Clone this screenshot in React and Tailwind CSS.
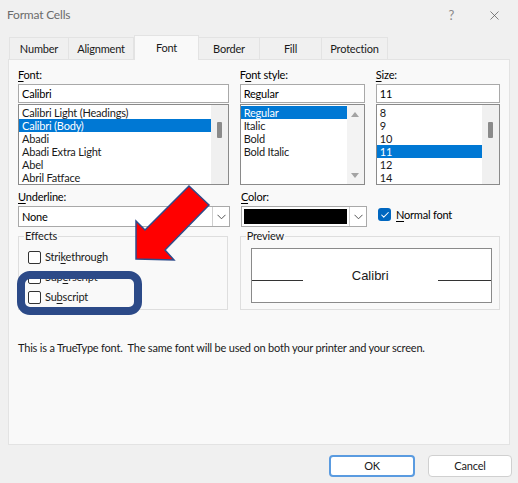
import { Check, X } from 'lucide-react';

const ui = { fontFamily: 'Lato, "Noto Sans", sans-serif' };

function Accel({ pre = '', u, post = '' }) {
  return (
    <span>
      {pre}
      <span className="underline underline-offset-2">{u}</span>
      {post}
    </span>
  );
}

function Chevron() {
  return (
    <svg width="9" height="6" viewBox="0 0 9 6" fill="none" stroke="#555" strokeWidth="1">
      <path d="M0.5 0.8 L4.5 4.8 L8.5 0.8" />
    </svg>
  );
}

function ListBox({ items, selected, scroll }) {
  return (
    <div className="flex h-[81px] border border-[#8a8a8a] bg-white mt-px">
      <div className="flex-1 pt-px">
        {items.map((item, i) => (
          <div
            key={item}
            className={`h-[13px] leading-[13px] pl-[3px] ${i === selected ? 'bg-[#0078d4] text-white' : 'text-[#1a1a1a]'}`}
          >
            {item}
          </div>
        ))}
      </div>
      {scroll === 'thumb' ? (
        <div className="w-[17px] bg-[#f0f0f0] flex justify-center pt-[17px]">
          <div className="w-[5px] h-[16px] bg-[#8a8a8a] rounded-[1px]" />
        </div>
      ) : (
        <div className="w-[17px] bg-[#f3f3f3] flex flex-col items-center justify-between pt-[7px] pb-[6px]">
          <div className="w-0 h-0 border-l-[4px] border-r-[4px] border-b-[5px] border-l-transparent border-r-transparent border-b-[#a3a3a3]" />
          <div className="w-0 h-0 border-l-[4px] border-r-[4px] border-t-[5px] border-l-transparent border-r-transparent border-t-[#a3a3a3]" />
        </div>
      )}
    </div>
  );
}

function Checkbox({ label }) {
  return (
    <div className="h-[20px] flex items-center">
      <div className="w-[13px] h-[13px] border border-[#333] rounded-[2px] bg-white" />
      <span className="ml-[4px] text-[#1a1a1a]">{label}</span>
    </div>
  );
}

export default function App() {
  const tabs = [
    { id: 'Number', w: 'w-[60px]' },
    { id: 'Alignment', w: 'w-[65px]' },
    { id: 'Font', w: 'w-[65px]' },
    { id: 'Border', w: 'w-[61px]' },
    { id: 'Fill', w: 'w-[62px]' },
    { id: 'Protection', w: 'w-[66px]' },
  ];

  return (
    <div className="relative w-[518px] h-[483px] bg-[#f0f0f0] overflow-hidden text-[11px] tracking-[-0.2px] leading-[14px]" style={ui}>
      {/* title bar */}
      <div className="h-[30px] flex items-center pl-[7px] pr-[16px]">
        <span className="text-[12px] text-[#6b6b6b]">Format Cells</span>
        <span className="ml-auto text-[13px] text-[#8a8a8a]">?</span>
        <X className="ml-[33px] w-[15px] h-[15px] text-[#5a5a5a]" strokeWidth={1.2} />
      </div>

      {/* tabs */}
      <div className="flex items-end pl-[9px] h-[29px]">
        {tabs.map((tab) =>
          tab.id === 'Font' ? (
            <div
              key={tab.id}
              className={`${tab.w} h-[25px] -mb-px relative z-10 bg-[#f9f9f9] border border-b-0 border-[#e3e3e3] flex items-center justify-center text-[#1a1a1a]`}
            >
              {tab.id}
            </div>
          ) : (
            <div
              key={tab.id}
              className={`${tab.w} h-[22px] border-t border-r border-[#e3e3e3] first:border-l flex items-center justify-center text-[#1a1a1a]`}
            >
              {tab.id}
            </div>
          )
        )}
      </div>

      {/* tab panel */}
      <div className="mx-[8px] h-[386px] bg-[#f9f9f9] border border-[#e3e3e3] px-[9px] pt-[8px]">
        <div className="flex">
          <div className="w-[212px]">
            <div className="h-[14px]"><Accel u="F" post="ont:" /></div>
            <div className="mt-[2px] h-[19px] border border-[#a9a9a9] bg-white pl-[3px] leading-[17px]">Calibri</div>
            <ListBox
              items={['Calibri Light (Headings)', 'Calibri (Body)', 'Abadi', 'Abadi Extra Light', 'Abel', 'Abril Fatface']}
              selected={1}
              scroll="thumb"
            />
          </div>
          <div className="w-[126px] ml-[11px]">
            <div className="h-[14px]"><Accel pre="F" u="o" post="nt style:" /></div>
            <div className="mt-[2px] h-[19px] border border-[#a9a9a9] bg-white pl-[3px] leading-[17px]">Regular</div>
            <ListBox items={['Regular', 'Italic', 'Bold', 'Bold Italic']} selected={0} scroll="arrows" />
          </div>
          <div className="w-[125px] ml-[11px]">
            <div className="h-[14px]"><Accel u="S" post="ize:" /></div>
            <div className="mt-[2px] h-[19px] border border-[#a9a9a9] bg-white pl-[3px] leading-[17px]">11</div>
            <ListBox items={['8', '9', '10', '11', '12', '14']} selected={3} scroll="thumb" />
          </div>
        </div>

        <div className="flex mt-[5px]">
          <div className="w-[212px]">
            <div className="h-[14px]"><Accel u="U" post="nderline:" /></div>
            <div className="mt-[2px] h-[21px] flex border border-[#a9a9a9] bg-white">
              <div className="flex-1 pl-[3px] leading-[19px]">None</div>
              <div className="w-[17px] border-l border-[#cfcfcf] flex items-center justify-center"><Chevron /></div>
            </div>
          </div>
          <div className="w-[126px] ml-[11px]">
            <div className="h-[14px]"><Accel u="C" post="olor:" /></div>
            <div className="mt-[2px] h-[21px] flex border border-[#a9a9a9] bg-white">
              <div className="flex-1 p-[2px] pr-[2px]"><div className="h-full bg-black" /></div>
              <div className="w-[17px] border-l border-[#cfcfcf] flex items-center justify-center"><Chevron /></div>
            </div>
          </div>
          <div className="ml-[11px] pt-[18px] flex items-start">
            <div className="w-[13px] h-[13px] rounded-[3px] bg-[#0067c0] flex items-center justify-center">
              <Check className="w-[10px] h-[10px] text-white" strokeWidth={2.5} />
            </div>
            <span className="ml-[5px] leading-[13px]"><Accel u="N" post="ormal font" /></span>
          </div>
        </div>

        <div className="flex mt-[2px]">
          <fieldset className="w-[211px] h-[81px] border border-[#dedede] pl-[9px] pt-[4px]">
            <legend className="-ml-[4px] px-[1px] text-[#1a1a1a]">Effects</legend>
            <Checkbox label={<Accel pre="Stri" u="k" post="ethrough" />} />
            <Checkbox label={<Accel pre="Sup" u="e" post="rscript" />} />
            <Checkbox label={<Accel pre="Su" u="b" post="script" />} />
          </fieldset>
          <fieldset className="w-[262px] h-[81px] ml-[12px] border border-[#dedede] pl-[10px] pt-[5px]">
            <legend className="-ml-[5px] px-[1px] text-[#1a1a1a]">Preview</legend>
            <div className="w-[241px] h-[55px] border border-[#8a8a8a] bg-white flex items-center">
              <div className="w-[51px] h-px bg-[#333] mt-[9px]" />
              <div className="flex-1 text-center text-[13px] tracking-normal text-[#1a1a1a]" style={{ fontFamily: '"Liberation Sans", sans-serif' }}>Calibri</div>
              <div className="w-[53px] h-px bg-[#333] mt-[9px]" />
            </div>
          </fieldset>
        </div>

        <p className="mt-[31px] text-[#1a1a1a]">
          This is a TrueType font.&nbsp; The same font will be used on both your printer and your screen.
        </p>
      </div>

      {/* buttons */}
      <div className="flex justify-end gap-[13px] pr-[6px] mt-[10px]">
        <button className="w-[86px] h-[22px] bg-white border-2 border-[#5a9be0] rounded-[4px] text-[#1a1a1a]">OK</button>
        <button className="w-[84px] h-[22px] bg-white border border-[#d0d0d0] rounded-[4px] text-[#1a1a1a]">Cancel</button>
      </div>

      {/* annotation overlay */}
      <svg className="absolute inset-0 pointer-events-none" width="518" height="483" viewBox="0 0 518 483">
        <polygon
          points="136,259 136,221 145,230 189,186 209,205 165,250 174,260"
          fill="#ff0000"
          stroke="#2f4b8a"
          strokeWidth="1.5"
          strokeLinejoin="miter"
        />
        <rect x="21" y="275" width="117" height="36" rx="9" fill="none" stroke="#2c4a88" strokeWidth="8" />
      </svg>
    </div>
  );
}
